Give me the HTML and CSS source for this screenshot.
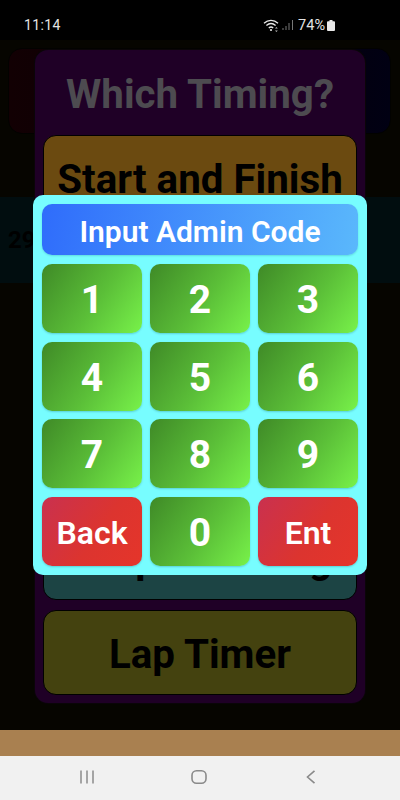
FILE: index.html
```html
<!DOCTYPE html>
<html lang="en">
<head>
<meta charset="utf-8">
<title>Admin Code</title>
<link rel="stylesheet" href="styles.css">
</head>
<body>
<div class="phone">
  <header class="status">
    <span class="clock">11:14</span>
    <div class="status-right">
      <svg class="wifi" viewBox="0 0 16 14" width="16" height="14"><path d="M1 5.200C5 1.400 11 1.400 15 5.200M3.400 7.600C6.200 5 9.800 5 12.600 7.600M5.800 10C7.100 8.800 8.900 8.800 10.200 10" fill="none" stroke="#e8e8e8" stroke-width="1.300"/><circle cx="8" cy="12" r="1.100" fill="#e8e8e8"/><path d="M12 10.500l1.400-1.500 1.400 1.500zM13.400 14l-1.400-1.500h2.800z" fill="#bbb"/></svg>
      <svg class="signal" viewBox="0 0 12 12" width="12" height="12"><path d="M1 11v-2M4 11V7M7 11V4M10.500 11V1" stroke="#777" stroke-width="1" fill="none"/></svg>
      <span class="pct">74%</span>
      <svg class="battery" viewBox="0 0 8 11" width="8" height="11"><path d="M2.500 0h3v1.200h1.500a1 1 0 0 1 1 1V10a1 1 0 0 1-1 1H1a1 1 0 0 1-1-1V2.200a1 1 0 0 1 1-1h1.500z" fill="#e8e8e8"/></svg>
    </div>
  </header>
  <main class="app">
    <div class="top-card"></div>
    <div class="strip"><span class="strip-num">29</span></div>
    <section class="timing">
      <h1 class="timing-title">Which Timing?</h1>
      <div class="opt opt-gold">Start and Finish</div>
      <div class="opt opt-teal"></div>
      <div class="opt opt-teal"></div>
      <div class="opt opt-teal"></div>
      <div class="opt opt-teal">Loop Counting</div>
      <div class="opt opt-olive">Lap Timer</div>
    </section>
    <section class="keypad">
      <div class="keypad-title">Input Admin Code</div>
      <div class="keys">
        <button class="key">1</button>
        <button class="key">2</button>
        <button class="key">3</button>
        <button class="key">4</button>
        <button class="key">5</button>
        <button class="key">6</button>
        <button class="key">7</button>
        <button class="key">8</button>
        <button class="key">9</button>
        <button class="key key-red key-word">Back</button>
        <button class="key">0</button>
        <button class="key key-red key-word">Ent</button>
      </div>
    </section>
  </main>
  <div class="brown"></div>
  <nav class="nav">
    <svg viewBox="0 0 16 14" width="16" height="14"><path d="M2 0.500v13M8 0.500v13M14 0.500v13" stroke="#8a8a8a" stroke-width="1.500" fill="none"/></svg>
    <svg viewBox="0 0 16 14" width="16" height="14"><rect x="1" y="0.800" width="14" height="12.400" rx="4.500" stroke="#8a8a8a" stroke-width="1.600" fill="none"/></svg>
    <svg viewBox="0 0 16 14" width="16" height="14"><path d="M11.500 0.800L4.500 7l7 6.200" stroke="#8a8a8a" stroke-width="1.600" fill="none"/></svg>
  </nav>
</div>
</body>
</html>
```
FILE: styles.css
```css
* { box-sizing: border-box; }
html, body { margin: 0; padding: 0; }
body { width: 400px; height: 800px; overflow: hidden; font-family: Roboto, "Liberation Sans", sans-serif; }
.phone { display: flex; flex-direction: column; width: 400px; height: 800px; background: #000; }

.status { display: flex; align-items: center; justify-content: space-between; height: 40px; padding: 10px 65px 0 24px; background: #000; color: #e4e4e4; flex: none; }
.clock { font-size: 14px; letter-spacing: 0.400px; }
.status-right { display: flex; align-items: center; gap: 3px; }
.signal { margin-right: 1px; }
.pct { font-size: 14.500px; }
.battery { margin-left: -1px; }

.app { position: relative; display: flex; flex-direction: column; height: 690px; padding: 8px 8px 0; background: #060500; flex: none; }
.top-card { height: 86px; margin-right: 1px; border: 1px solid #020200; border-radius: 14px; background: linear-gradient(90deg, #120003 0%, #0a0005 50%, #010013 100%); }
.strip { display: flex; align-items: center; height: 86px; margin: 63px -8px 0; padding-left: 8px; background: #010d0f; }
.strip-num { font-size: 24px; font-weight: 700; color: #000; }

.timing { position: absolute; left: 35px; top: 10px; width: 330px; height: 653px; padding: 0 8px; border-radius: 13px; background: #1f0026; box-shadow: 0 0 0 1px #0a0508; }
.timing-title { margin: 0; height: 85px; display: flex; align-items: center; justify-content: center; padding-top: 4px; font-size: 40.300px; font-weight: 700; color: #4d4b50; }
.opt { display: flex; align-items: center; justify-content: center; height: 85px; margin-bottom: 10px; padding-top: 3px; border: 1.500px solid #000; border-radius: 13px; font-size: 40.300px; font-weight: 700; color: #000; white-space: nowrap; }
.opt-gold { background: #6b4a10; }
.opt-teal { background: #1c4444; }
.opt-olive { background: #44420f; margin-bottom: 0; }

.keypad { position: absolute; left: 33px; top: 155px; width: 334px; height: 380px; padding: 9px; border-radius: 10px; background: #77fdff; }
.keypad-title { display: flex; align-items: center; justify-content: center; height: 51px; margin-bottom: 9px; padding-top: 3px; border-radius: 10px; background: linear-gradient(100deg, #2f6cfb 0%, #5ab8fc 100%); color: #fff; font-size: 30px; font-weight: 600; box-shadow: 0 1px 2px rgba(0,80,90,.2); }
.keys { display: grid; grid-template-columns: repeat(3, 100px); grid-auto-rows: 69px; gap: 8.700px 8px; }
.key { display: flex; align-items: center; justify-content: center; padding: 3px 0 0; border: 0; border-radius: 10px; background: linear-gradient(125deg, #3f8a27 0%, #5bbf38 55%, #78f24a 100%); color: #fff; font-family: inherit; font-size: 39px; font-weight: 700; box-shadow: 0 1px 2px rgba(0,80,90,.25); }
.key-red { background: linear-gradient(125deg, #c9314f 0%, #dc342f 55%, #e5352a 100%); }
.key-word { font-size: 32px; font-weight: 600; }

.brown { height: 26px; background: #a98050; flex: none; }
.nav { display: flex; align-items: center; gap: 96px; height: 44px; padding: 0 0 2px 79px; background: #f1f1f1; flex: none; }
```
